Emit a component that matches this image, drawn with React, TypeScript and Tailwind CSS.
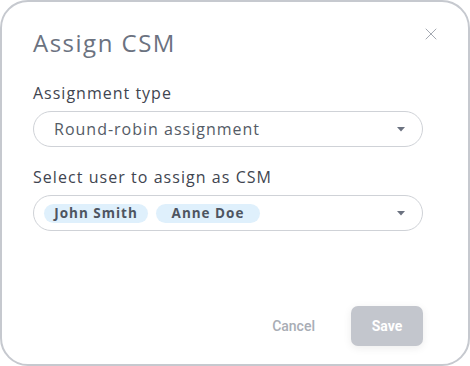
import { X } from 'lucide-react';

const users = ['John Smith', 'Anne Doe'];

function Caret() {
  return (
    <svg width="8" height="5" viewBox="0 0 8 5" className="shrink-0">
      <path d="M0 0 L8 0 L4 4.5 Z" fill="#6b7280" />
    </svg>
  );
}

export default function App() {
  return (
    <div className="w-[470px] h-[366px] bg-white" style={{ fontFamily: '"Open Sans", sans-serif' }}>
      <div className="w-full h-full border-2 border-[#c6c9cf] rounded-[28px] flex flex-col pl-[31px] pr-[45px] pt-[25px] relative">
        <button className="absolute right-[27px] top-[22px] text-[#a4a9b2]">
          <X size={20} strokeWidth={1.2} />
        </button>

        <h2 className="text-[24px] leading-[32px] text-[#6b7280] tracking-[1.5px]">Assign CSM</h2>

        <label className="mt-[23px] text-[16px] leading-[22px] text-[#3f4550] tracking-[1px]">Assignment type</label>
        <div className="mt-[7px] h-[36px] rounded-full border border-[#cfd2d7] flex items-center pl-[20px] pr-[17px] justify-between">
          <span className="text-[16px] text-[#545b66] tracking-[1px]">Round-robin assignment</span>
          <Caret />
        </div>

        <label className="mt-[19px] text-[16px] leading-[22px] text-[#3f4550] tracking-[1.05px]">Select user to assign as CSM</label>
        <div className="mt-[7px] h-[36px] rounded-full border border-[#cfd2d7] flex items-center pl-[10px] pr-[17px] justify-between">
          <div className="flex items-center gap-[8px]">
            {users.map((u) => (
              <span
                key={u}
                className="h-[19px] w-[104px] rounded-full bg-[#dff0fc] text-[13.5px] font-bold text-[#4e5561] flex items-center justify-center tracking-[1px]"
              >
                {u}
              </span>
            ))}
          </div>
          <Caret />
        </div>

        <div className="mt-auto mb-[18px] flex items-center justify-end gap-[36px]" style={{ fontFamily: 'Roboto, sans-serif' }}>
          <button className="text-[14px] font-medium text-[#a9adb5]">Cancel</button>
          <button className="w-[72px] h-[40px] rounded-[7px] bg-[#c3c6cd] text-white text-[14px] font-bold shadow-[0_2px_8px_rgba(0,0,0,0.08)]">
            Save
          </button>
        </div>
      </div>
    </div>
  );
}
